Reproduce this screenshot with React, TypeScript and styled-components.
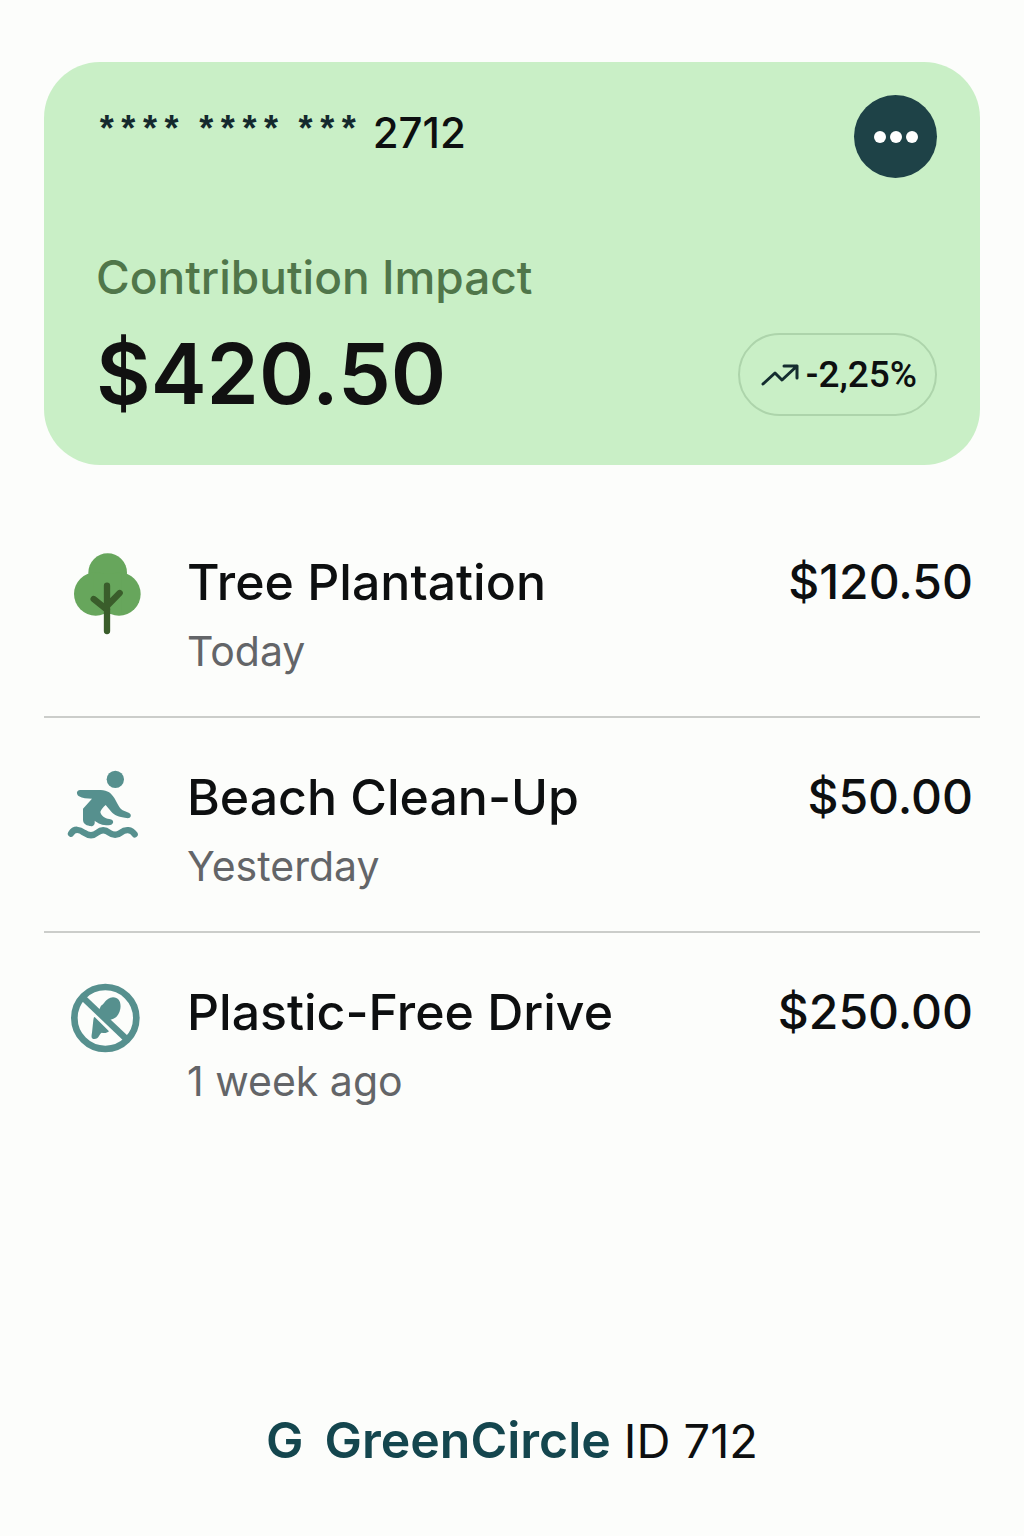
import React from "react";
import styled, { createGlobalStyle } from "styled-components";

const GlobalStyle = createGlobalStyle`
  *, *::before, *::after { box-sizing: border-box; }
  body {
    margin: 0;
    background: #fcfdfb;
    color: #0d0f10;
    font-family: Inter, "Liberation Sans", sans-serif;
  }
  h1, h2, p, ul { margin: 0; padding: 0; }
`;

const Page = styled.main`
  display: flex;
  flex-direction: column;
  min-height: 100vh;
  padding: 62px 44px 65px;
`;

const Card = styled.section`
  display: flex;
  flex-direction: column;
  padding: 33px 43px 49px 52px;
  border-radius: 56px;
  background: #c9efc6;
`;

const CardHeader = styled.header`
  display: flex;
  justify-content: space-between;
  align-items: flex-start;
`;

const AccountNumber = styled.p`
  display: flex;
  align-items: flex-start;
  gap: 13px;
  font-size: 42px;
  font-weight: 500;
  line-height: 76px;
`;

const Mask = styled.span`
  color: #14292d;
  font-family: "Liberation Mono", monospace;
  font-size: 36px;
  font-weight: 700;
`;

const MenuButton = styled.button`
  display: flex;
  align-items: center;
  justify-content: center;
  gap: 4px;
  width: 83px;
  height: 83px;
  padding: 0;
  border: 0;
  border-radius: 50%;
  background: #1e4247;
  cursor: pointer;
`;

const Dot = styled.span`
  width: 12px;
  height: 12px;
  border-radius: 50%;
  background: #fff;
`;

const CardLabel = styled.h1`
  margin-top: 71px;
  color: #50764a;
  font-size: 46px;
  font-weight: 500;
  line-height: 56px;
`;

const Balance = styled.div`
  display: flex;
  align-items: center;
  justify-content: space-between;
  margin-top: 27px;
`;

const Total = styled.p`
  color: #111;
  font-size: 84px;
  font-weight: 600;
  line-height: 84px;
`;

const Trend = styled.p`
  display: flex;
  align-items: center;
  gap: 7px;
  height: 83px;
  padding: 0 18px 0 21px;
  border: 2px solid #add4ab;
  border-radius: 42px;
  font-family: Roboto, "Liberation Sans", sans-serif;
  font-size: 37px;
  font-weight: 500;
`;

const Activity = styled.ul`
  margin-top: 38px;
  list-style: none;
`;

const Row = styled.li`
  display: flex;
  align-items: flex-start;
  gap: 37px;
  padding: 49px 7px 39px 16px;
  border-bottom: 2px solid #cbcdca;

  &:last-child { border-bottom: 0; }
`;

const Details = styled.div`
  display: flex;
  flex: 1;
  flex-direction: column;
  gap: 13px;
`;

const Title = styled.h2`
  font-size: 50px;
  font-weight: 500;
  line-height: 60px;
`;

const When = styled.p`
  color: #636568;
  font-size: 41px;
  line-height: 52px;
`;

const Amount = styled.p`
  font-size: 48px;
  font-weight: 500;
  line-height: 60px;
`;

const Footer = styled.footer`
  display: flex;
  align-items: baseline;
  justify-content: center;
  margin-top: auto;
  font-size: 47px;
  line-height: 60px;
`;

const Brand = styled.span<{ $gap: number }>`
  margin-right: ${(p) => p.$gap}px;
  color: #14464e;
  font-size: 50px;
  font-weight: 600;
`;

const TreeIcon = () => (
  <svg width="90" height="90" viewBox="0 36 270 270" aria-hidden="true">
    <g fill="#67a65c">
      <circle cx="143" cy="98" r="58" />
      <circle cx="107" cy="162" r="65" />
      <circle cx="177" cy="162" r="65" />
      <rect x="100" y="100" width="84" height="122" />
    </g>
    <path
      d="M141 137V273M101 177L141 209M179 159L141 198"
      fill="none"
      stroke="#3a5d2b"
      strokeWidth="19"
      strokeLinecap="round"
    />
  </svg>
);

const BeachIcon = () => (
  <svg width="90" height="90" viewBox="15 36 270 270" aria-hidden="true">
    <g fill="#56908e">
      <circle cx="181" cy="73" r="26" />
      <path d="M75 105H137C158 105 170 116 178 129C189 148 192 158 203 166L221 173C233 179 227 192 214 189C190 185 178 181 169 170L152 150C145 156 139 163 136 171C139 183 149 190 163 192C181 194 176 211 161 211C141 211 129 205 119 197C121 211 113 215 104 213C91 211 84 205 84 193V161L111 131C96 131 82 130 72 124C62 117 65 105 75 105Z" />
    </g>
    <path
      d="M48 236C58 219 74 223 87 233C100 242 115 243 127 233C139 223 151 224 163 233C175 242 187 241 197 233C212 221 229 223 239 238"
      fill="none"
      stroke="#56908e"
      strokeWidth="19"
      strokeLinecap="round"
    />
  </svg>
);

const PlasticFreeIcon = () => (
  <svg width="90" height="90" viewBox="15 36 270 270" aria-hidden="true">
    <g fill="#56908e">
      <path d="M138 107C148 104 151 84 174 82C192 82 199 98 196 116C193 133 183 145 171 148L158 152L132 120Z" />
      <path d="M119 141L162 184C156 190 147 190 140 188C131 194 133 206 118 207C108 207 109 198 111 188L115 150Q116 140 119 141Z" />
    </g>
    <g fill="none" stroke="#56908e">
      <circle cx="151" cy="144" r="93" strokeWidth="20" />
      <path d="M85 84L213 206" strokeWidth="19" />
    </g>
  </svg>
);

const TrendIcon = () => (
  <svg width="38" height="24" viewBox="0 0 38 24" aria-hidden="true">
    <path
      d="M2 22L14 11L21 18L36 4M23 4H36V16"
      fill="none"
      stroke="#142d2f"
      strokeWidth="3"
      strokeLinecap="round"
      strokeLinejoin="round"
    />
  </svg>
);

const items = [
  { icon: <TreeIcon />, title: "Tree Plantation", when: "Today", amount: "$120.50" },
  { icon: <BeachIcon />, title: "Beach Clean-Up", when: "Yesterday", amount: "$50.00" },
  { icon: <PlasticFreeIcon />, title: "Plastic-Free Drive", when: "1 week ago", amount: "$250.00" },
];

export default function App() {
  return (
    <>
      <GlobalStyle />
      <Page>
        <Card>
          <CardHeader>
            <AccountNumber>
              <Mask>****</Mask>
              <Mask>****</Mask>
              <Mask>***</Mask>
              <span>2712</span>
            </AccountNumber>
            <MenuButton type="button" aria-label="More options">
              <Dot />
              <Dot />
              <Dot />
            </MenuButton>
          </CardHeader>
          <CardLabel>Contribution Impact</CardLabel>
          <Balance>
            <Total>$420.50</Total>
            <Trend>
              <TrendIcon />
              <span>-2,25%</span>
            </Trend>
          </Balance>
        </Card>
        <Activity>
          {items.map((item) => (
            <Row key={item.title}>
              {item.icon}
              <Details>
                <Title>{item.title}</Title>
                <When>{item.when}</When>
              </Details>
              <Amount>{item.amount}</Amount>
            </Row>
          ))}
        </Activity>
        <Footer>
          <Brand $gap={21}>G</Brand>
          <Brand $gap={13}>GreenCircle</Brand>
          <span>ID 712</span>
        </Footer>
      </Page>
    </>
  );
}
